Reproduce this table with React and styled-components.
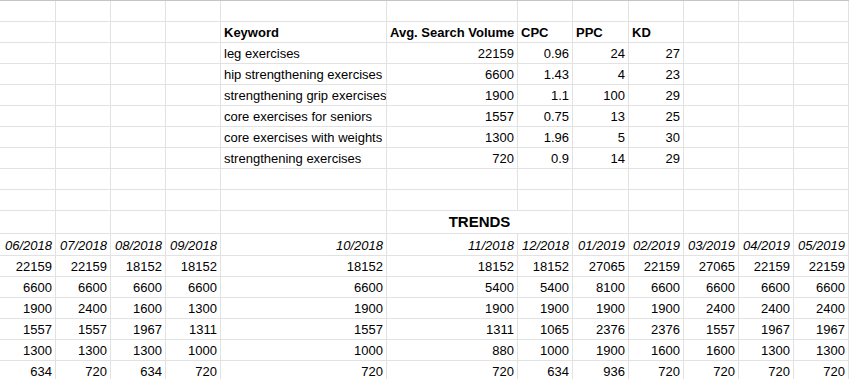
import React from 'react';
import styled, { createGlobalStyle } from 'styled-components';

const GlobalStyle = createGlobalStyle`
  html, body {
    margin: 0;
    padding: 0;
    background: #ffffff;
  }
  body {
    font-family: 'Liberation Sans', Arial, sans-serif;
    color: #000000;
  }
`;

// column widths include the 1px gridline on the right
const COLUMNS = [56, 55, 55, 55, 166, 131, 55, 56, 55, 55, 55, 55];
const ROWS = [21, 21, 21, 21, 21, 21, 21, 21, 21, 21, 23, 22, 21, 21, 21, 21, 21, 21];

const Sheet = styled.div`
  display: grid;
  grid-template-columns: ${COLUMNS.map(w => `${w}px`).join(' ')};
  grid-template-rows: ${ROWS.map(h => `${h}px`).join(' ')};
  width: 849px;
  height: 379px;
  overflow: hidden;
  border-top: 1px solid #c4c4c4;
  box-sizing: border-box;
`;

const Cell = styled.div`
  box-sizing: border-box;
  grid-column: span ${({ $span }) => $span || 1};
  display: flex;
  align-items: flex-end;
  justify-content: ${({ $align }) => ($align === 'right' ? 'flex-end' : $align === 'center' ? 'center' : 'flex-start')};
  padding: 0 3px ${({ $size }) => ($size ? 4 : 2)}px 3px;
  border-right: 1px solid #e2e2e2;
  border-bottom: 1px solid #e2e2e2;
  font-size: ${({ $size }) => $size || 13}px;
  line-height: 15px;
  font-weight: ${({ $bold }) => ($bold ? 700 : 400)};
  font-style: ${({ $italic }) => ($italic ? 'italic' : 'normal')};
  white-space: nowrap;
  overflow: hidden;
`;

const empty = () => Array(12).fill(null);

const head = v => ({ v, bold: true });
const date = v => ({ v, italic: true, align: 'right' });

const keywords = [
  ['leg exercises', 22159, 0.96, 24, 27],
  ['hip strengthening exercises', 6600, 1.43, 4, 23],
  ['strengthening grip exercises', 1900, 1.1, 100, 29],
  ['core exercises for seniors', 1557, 0.75, 13, 25],
  ['core exercises with weights', 1300, 1.96, 5, 30],
  ['strengthening exercises', 720, 0.9, 14, 29],
];

const months = [
  '06/2018', '07/2018', '08/2018', '09/2018', '10/2018', '11/2018',
  '12/2018', '01/2019', '02/2019', '03/2019', '04/2019', '05/2019',
];

const trends = [
  [22159, 22159, 18152, 18152, 18152, 18152, 18152, 27065, 22159, 27065, 22159, 22159],
  [6600, 6600, 6600, 6600, 6600, 5400, 5400, 8100, 6600, 6600, 6600, 6600],
  [1900, 2400, 1600, 1300, 1900, 1900, 1900, 1900, 1900, 2400, 2400, 2400],
  [1557, 1557, 1967, 1311, 1557, 1311, 1065, 2376, 2376, 1557, 1967, 1967],
  [1300, 1300, 1300, 1000, 1000, 880, 1000, 1900, 1600, 1600, 1300, 1300],
  [634, 720, 634, 720, 720, 720, 634, 936, 720, 720, 720, 720],
];

const buildRows = () => {
  const rows = [];
  rows.push(empty());
  rows.push([null, null, null, null, head('Keyword'), head('Avg. Search Volume'), head('CPC'), head('PPC'), head('KD'), null, null, null]);
  keywords.forEach(k => rows.push([null, null, null, null, ...k, null, null, null]));
  rows.push(empty());
  rows.push(empty());
  // merged F:G
  rows.push([null, null, null, null, null, { v: 'TRENDS', bold: true, size: 15, align: 'center', span: 2 }, null, null, null, null, null]);
  rows.push(months.map(date));
  trends.forEach(t => rows.push(t));
  return rows;
};

const renderCell = (cell, key) => {
  if (cell === null) return <Cell key={key} />;
  if (typeof cell === 'number') return <Cell key={key} $align="right">{cell}</Cell>;
  if (typeof cell === 'string') return <Cell key={key}>{cell}</Cell>;
  return (
    <Cell key={key} $align={cell.align} $bold={cell.bold} $italic={cell.italic} $size={cell.size} $span={cell.span}>
      {cell.v}
    </Cell>
  );
};

export default function App() {
  const rows = buildRows();
  return (
    <>
      <GlobalStyle />
      <Sheet>
        {rows.map((row, r) => row.map((cell, c) => renderCell(cell, `${r}-${c}`)))}
      </Sheet>
    </>
  );
}
